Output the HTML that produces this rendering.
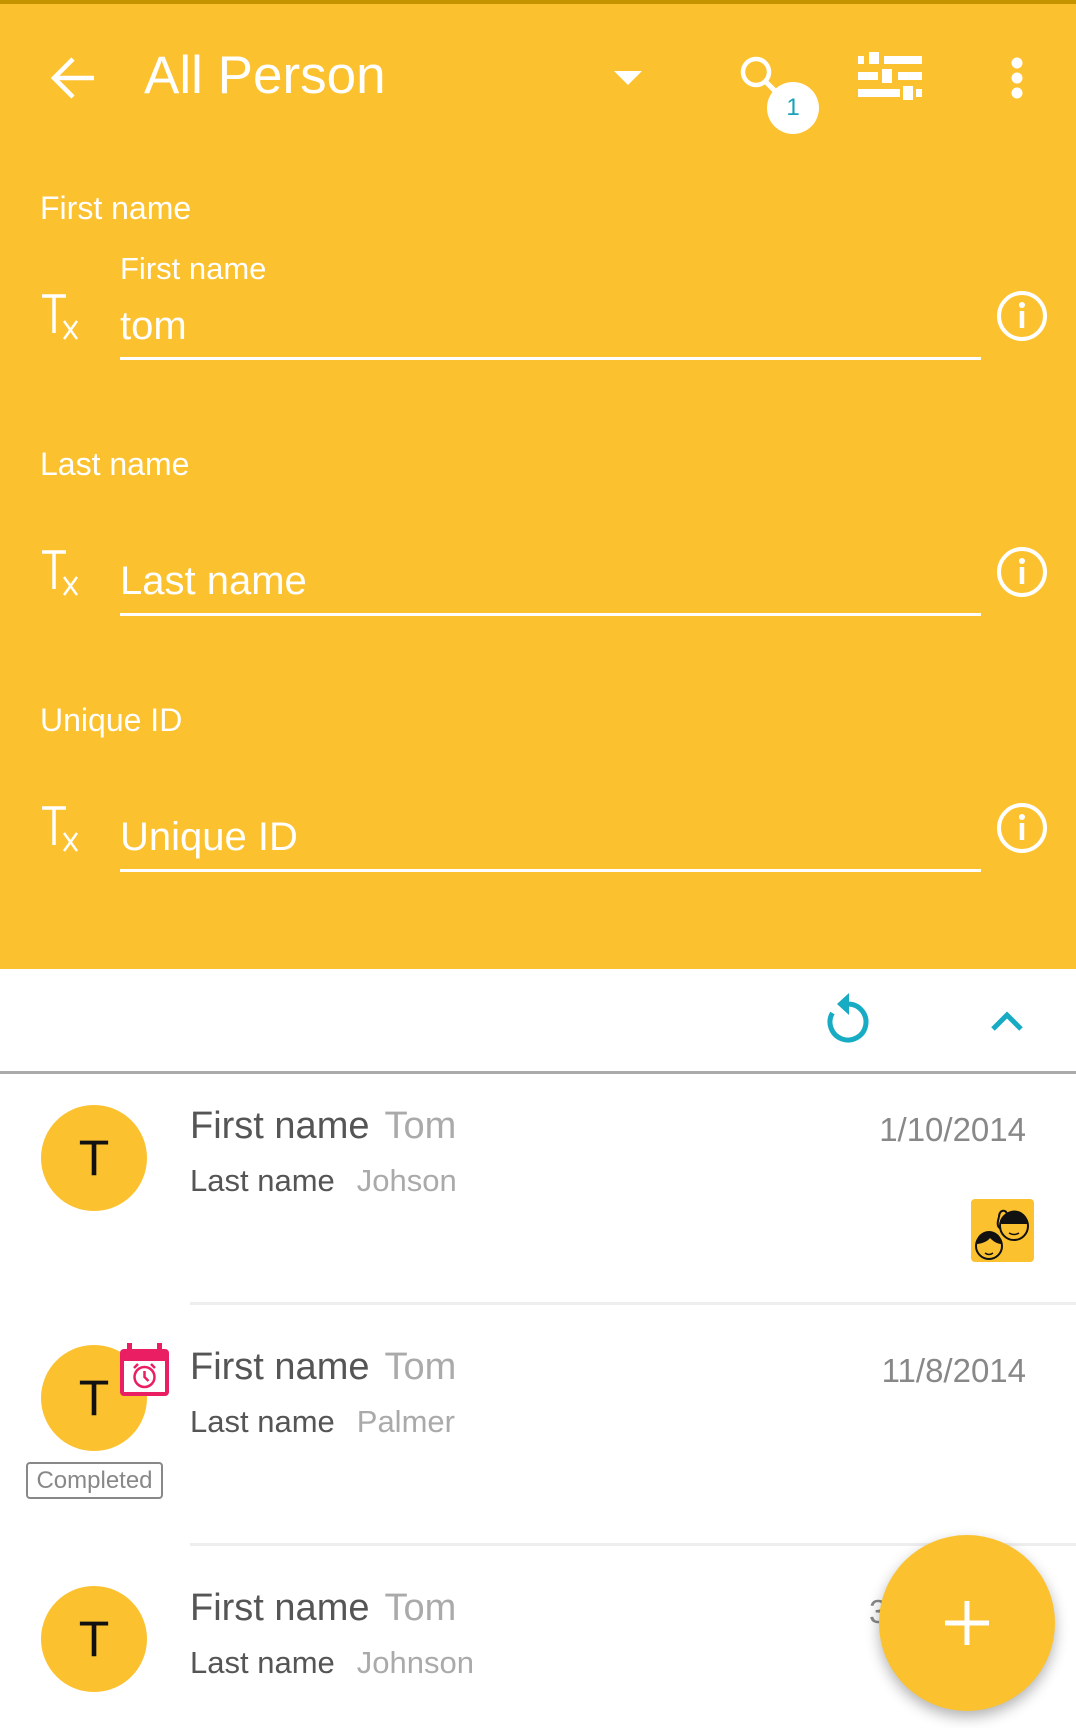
<!DOCTYPE html>
<html><head><meta charset="utf-8">
<style>
*{margin:0;padding:0;box-sizing:border-box}
body{width:1076px;height:1728px;overflow:hidden;background:#fff;font-family:"Liberation Sans",sans-serif;position:relative}
.a{position:absolute;white-space:nowrap}
.y{background:#FBC12F}
.w{color:#fff}
.ul{position:absolute;left:120px;width:861px;height:3px;background:#fff}
.lbl{font-size:32px;color:#fff}
.fld{font-size:40px;color:#fff}
.av{position:absolute;width:106px;height:106px;border-radius:50%;background:#FBC12F;color:#111;font-size:50px;text-align:center;line-height:106px}
.t1{font-size:38px;color:#555}
.t1 span{color:#aaa;margin-left:15px}
.t2 span{color:#aaa;margin-left:22px}
.t2{font-size:31px;color:#555}
.dt{font-size:33px;color:#888;right:50px}
.div{position:absolute;left:190px;right:0;height:3px;background:#eee}
</style></head><body>
<div class="a y" style="left:0;top:0;width:1076px;height:969px"></div>
<div class="a" style="left:0;top:0;width:1076px;height:4px;background:#C69300"></div>

<svg class="a" style="left:50px;top:55px" width="46" height="46" viewBox="0 0 46 46"><path d="M44 23H6M23 4L4 23l19 19" stroke="#fff" stroke-width="4.5" fill="none"/></svg>
<div class="a w" style="left:144px;top:45px;font-size:53px">All Person</div>
<svg class="a" style="left:614px;top:71px" width="28" height="16"><path d="M0 0h28L14 14z" fill="#fff"/></svg>
<svg class="a" style="left:736px;top:52px" width="50" height="50"><circle cx="20" cy="20" r="13" stroke="#fff" stroke-width="4.5" fill="none"/><path d="M29 29l14 14" stroke="#fff" stroke-width="5"/></svg>
<div class="a" style="left:767px;top:82px;width:52px;height:52px;border-radius:50%;background:#fff;color:#1AA3B8;font-size:24px;text-align:center;line-height:52px">1</div>
<svg class="a" style="left:858px;top:52px" width="64" height="50" viewBox="0 0 64 50"><g fill="#fff"><rect x="0" y="4" width="6" height="8"/><rect x="11" y="0" width="10" height="12"/><rect x="26" y="4" width="38" height="8"/><rect x="0" y="20" width="20" height="8"/><rect x="24" y="17" width="10" height="14"/><rect x="40" y="20" width="24" height="8"/><rect x="0" y="37" width="42" height="8"/><rect x="45" y="34" width="10" height="14"/><rect x="58" y="37" width="6" height="8"/></g></svg>
<svg class="a" style="left:1010px;top:56px" width="14" height="44"><circle cx="7" cy="7" r="5.5" fill="#fff"/><circle cx="7" cy="22" r="5.5" fill="#fff"/><circle cx="7" cy="37" r="5.5" fill="#fff"/></svg>

<div class="a lbl" style="left:40px;top:190px">First name</div>
<div class="a w" style="left:120px;top:251px;font-size:31px">First name</div>
<div class="a fld" style="left:120px;top:304px">tom</div>
<div class="ul" style="top:357px"></div>

<div class="a lbl" style="left:40px;top:446px">Last name</div>
<div class="a fld" style="left:120px;top:559px">Last name</div>
<div class="ul" style="top:613px"></div>

<div class="a lbl" style="left:40px;top:702px">Unique ID</div>
<div class="a fld" style="left:120px;top:815px">Unique ID</div>
<div class="ul" style="top:869px"></div>

<svg class="a" style="left:40px;top:293px" width="42" height="48"><path d="M2 3h24M14 3v37" stroke="#fff" stroke-width="3.5"/><path d="M24 28l13 18M37 28L24 46" stroke="#fff" stroke-width="2.5"/></svg>
<svg class="a" style="left:40px;top:549px" width="42" height="48"><path d="M2 3h24M14 3v37" stroke="#fff" stroke-width="3.5"/><path d="M24 28l13 18M37 28L24 46" stroke="#fff" stroke-width="2.5"/></svg>
<svg class="a" style="left:40px;top:805px" width="42" height="48"><path d="M2 3h24M14 3v37" stroke="#fff" stroke-width="3.5"/><path d="M24 28l13 18M37 28L24 46" stroke="#fff" stroke-width="2.5"/></svg>
<svg class="a" style="left:996px;top:290px" width="52" height="52"><circle cx="26" cy="26" r="23" stroke="#fff" stroke-width="4" fill="none"/><circle cx="26" cy="15" r="3" fill="#fff"/><path d="M26 21v17" stroke="#fff" stroke-width="4.5"/></svg>
<svg class="a" style="left:996px;top:546px" width="52" height="52"><circle cx="26" cy="26" r="23" stroke="#fff" stroke-width="4" fill="none"/><circle cx="26" cy="15" r="3" fill="#fff"/><path d="M26 21v17" stroke="#fff" stroke-width="4.5"/></svg>
<svg class="a" style="left:996px;top:802px" width="52" height="52"><circle cx="26" cy="26" r="23" stroke="#fff" stroke-width="4" fill="none"/><circle cx="26" cy="15" r="3" fill="#fff"/><path d="M26 21v17" stroke="#fff" stroke-width="4.5"/></svg>

<svg class="a" style="left:823px;top:990px" width="50" height="56" viewBox="0 0 50 56"><path d="M25 14A18 18 0 1 1 9.4 23" stroke="#17ABC4" stroke-width="5" fill="none"/><path d="M26 3L14 14l12 11z" fill="#17ABC4"/></svg>
<svg class="a" style="left:990px;top:1010px" width="34" height="22"><path d="M3 19L17 5l14 14" stroke="#17ABC4" stroke-width="5" fill="none"/></svg>
<div class="a" style="left:0;top:1071px;width:1076px;height:3px;background:#aaa"></div>

<div class="av" style="left:41px;top:1105px">T</div>
<div class="a t1" style="left:190px;top:1105px">First name<span>Tom</span></div>
<div class="a dt" style="top:1111px">1/10/2014</div>
<div class="a t2" style="left:190px;top:1163px">Last name<span>Johson</span></div>
<svg class="a" style="left:971px;top:1199px" width="63" height="63" viewBox="0 0 63 63"><rect width="63" height="63" rx="4" fill="#FBC12F"/><circle cx="43" cy="27" r="14" fill="none" stroke="#111" stroke-width="2"/><path d="M30 25a13 13 0 0 1 27 0z" fill="#111"/><path d="M28 18c0-8 8-8 8-2" stroke="#111" stroke-width="2" fill="none"/><path d="M28 18c-2 6-2 10 2 12" stroke="#111" stroke-width="2" fill="none"/><circle cx="18" cy="47" r="13" fill="#FBC12F" stroke="#111" stroke-width="2"/><path d="M5 45a13 13 0 0 1 26 0c-6 0-10-4-12-6-2 3-8 6-14 6z" fill="#111"/><path d="M14 54q4 3 8 0M38 34q5 3 10 0" stroke="#111" stroke-width="1.5" fill="none"/></svg>
<div class="div" style="top:1302px"></div>

<div class="av" style="left:41px;top:1345px">T</div>
<svg class="a" style="left:120px;top:1343px" width="49" height="53" viewBox="0 0 49 53"><rect x="0" y="6" width="49" height="47" rx="4" fill="#E91E63"/><rect x="7" y="0" width="5" height="10" fill="#E91E63"/><rect x="37" y="0" width="5" height="10" fill="#E91E63"/><rect x="4" y="18" width="41" height="31" fill="#fff"/><circle cx="24.5" cy="34" r="10" fill="none" stroke="#E91E63" stroke-width="2.5"/><path d="M24.5 28v6l4 4M14 25l4-4M35 25l-4-4" stroke="#E91E63" stroke-width="2.5" fill="none"/></svg>
<div class="a t1" style="left:190px;top:1346px">First name<span>Tom</span></div>
<div class="a dt" style="top:1352px">11/8/2014</div>
<div class="a t2" style="left:190px;top:1404px">Last name<span>Palmer</span></div>
<div class="a" style="left:26px;top:1462px;width:137px;height:37px;border:2px solid #888;border-radius:4px;color:#888;font-size:24px;text-align:center;line-height:33px">Completed</div>
<div class="div" style="top:1543px"></div>

<div class="av" style="left:41px;top:1586px">T</div>
<div class="a t1" style="left:190px;top:1587px">First name<span>Tom</span></div>
<div class="a" style="left:869px;top:1593px;font-size:33px;color:#888">3</div>
<div class="a t2" style="left:190px;top:1645px">Last name<span>Johnson</span></div>

<div class="a" style="left:879px;top:1535px;width:176px;height:176px;border-radius:50%;background:#FBC12F;box-shadow:0 6px 14px rgba(0,0,0,.3)"></div>
<svg class="a" style="left:943px;top:1599px" width="48" height="48"><path d="M24 2v44M2 24h44" stroke="#fff" stroke-width="5"/></svg>
</body></html>
